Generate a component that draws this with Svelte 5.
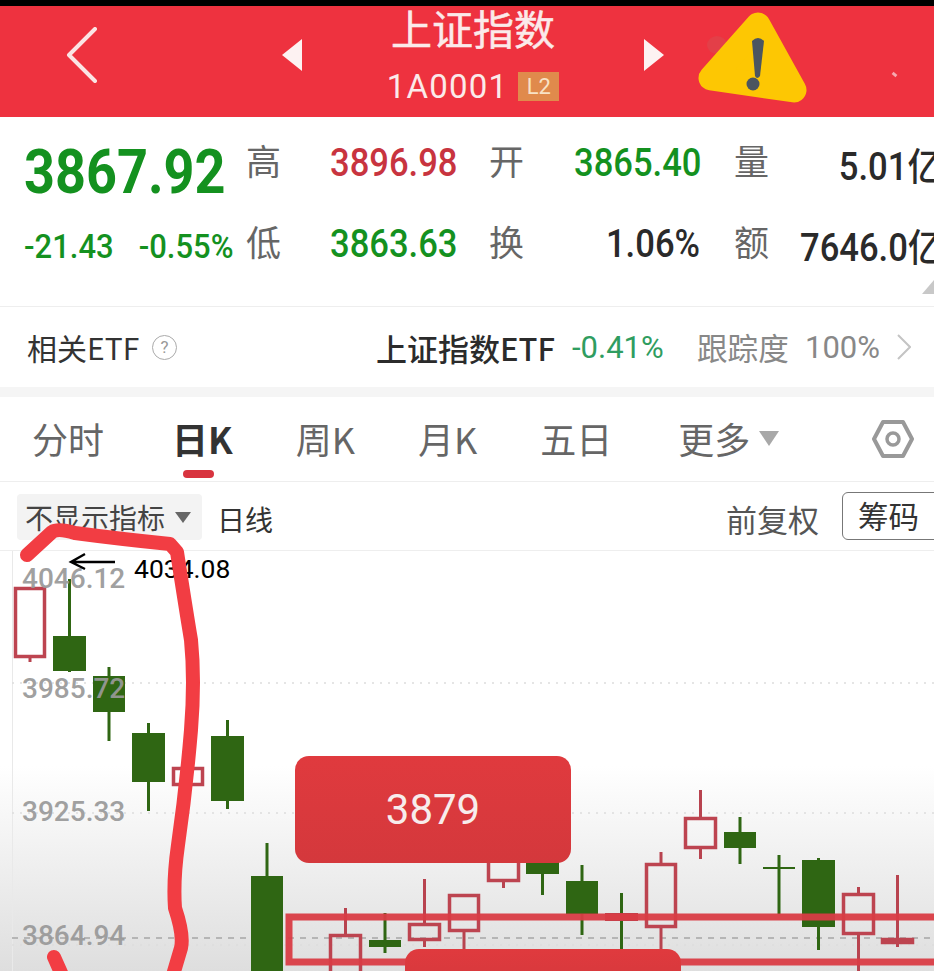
<script>
  const G = '#2f6613';
  // x: body left, w: body width, t/b: body top/bottom, hi/lo: wick, up: hollow red candle
  const candles = [
    { x: 14, w: 32, t: 587, b: 658, hi: 587, lo: 662, up: true },
    { x: 53, w: 33, t: 636, b: 671, hi: 579, lo: 672 },
    { x: 93, w: 32, t: 676, b: 712, hi: 667, lo: 741 },
    { x: 132, w: 33, t: 733, b: 782, hi: 723, lo: 811 },
    { x: 172, w: 32, t: 767, b: 786, hi: 767, lo: 786, up: true },
    { x: 211, w: 33, t: 736, b: 801, hi: 720, lo: 809 },
    { x: 251, w: 32, t: 876, b: 980, hi: 843, lo: 980 },
    { x: 329, w: 33, t: 934, b: 985, hi: 908, lo: 985, up: true },
    { x: 369, w: 32, t: 940, b: 947, hi: 913, lo: 953 },
    { x: 408, w: 33, t: 923, b: 941, hi: 879, lo: 947, up: true },
    { x: 448, w: 32, t: 894, b: 932, hi: 894, lo: 952, up: true },
    { x: 487, w: 33, t: 850, b: 882, hi: 850, lo: 888, up: true },
    { x: 526, w: 33, t: 850, b: 874, hi: 850, lo: 895 },
    { x: 566, w: 32, t: 881, b: 914, hi: 865, lo: 935 },
    { x: 605, w: 33, t: 913, b: 921, hi: 893, lo: 950, doji: true },
    { x: 645, w: 32, t: 863, b: 928, hi: 852, lo: 955, up: true },
    { x: 684, w: 33, t: 817, b: 849, hi: 790, lo: 859, up: true },
    { x: 724, w: 32, t: 832, b: 848, hi: 817, lo: 864 },
    { x: 763, w: 32, t: 867, b: 868, hi: 855, lo: 914 },
    { x: 802, w: 33, t: 860, b: 927, hi: 858, lo: 950 },
    { x: 842, w: 33, t: 893, b: 935, hi: 887, lo: 975, up: true },
    { x: 881, w: 33, t: 938, b: 944, hi: 875, lo: 947, up: true }
  ];
  const axis = [
    { v: '4046.12', y: 588 },
    { v: '3985.72', y: 698 },
    { v: '3925.33', y: 821 },
    { v: '3864.94', y: 945 }
  ];
  const tabs = ['分时', '日K', '周K', '月K', '五日'];
</script>

<div class="page">
  <div class="statusbar"></div>

  <header class="header">
    <svg class="back" viewBox="0 0 32 56"><path d="M29 2 L3 28 L29 54" /></svg>
    <span class="tri tri-l"></span>
    <div class="title">
      <div class="name">上证指数</div>
      <div class="code"><span>1A0001</span><span class="badge">L2</span></div>
    </div>
    <span class="tri tri-r"></span>
    <svg class="warn" viewBox="0 0 116 100">
      <ellipse cx="20" cy="37" rx="10" ry="9" fill="#cf5a5a" opacity=".35" />
      <polygon points="61,17 14,70 97,82" fill="#fdc703" stroke="#fdc703" stroke-width="25" stroke-linejoin="round" />
      <path d="M55 33 Q61 27 67 33 L63 68 Q60 72 58 68 Z" fill="#4b5560" />
      <circle cx="56" cy="76" r="6.5" fill="#4b5560" />
    </svg>
    <span class="speck"></span>
  </header>

  <section class="quote">
    <div class="price">3867.92</div>
    <div class="lab">高</div>
    <div class="val red">3896.98</div>
    <div class="lab">开</div>
    <div class="val green gap2">3865.40</div>
    <div class="lab">量</div>
    <div class="val dark end">5.01亿</div>

    <div class="change"><span>-21.43</span><span>-0.55%</span></div>
    <div class="lab">低</div>
    <div class="val green">3863.63</div>
    <div class="lab">换</div>
    <div class="val dark gap2">1.06%</div>
    <div class="lab">额</div>
    <div class="val dark end">7646.0亿</div>
    <span class="corner"></span>
  </section>

  <section class="etf">
    <span class="etf-title">相关ETF</span>
    <span class="help">?</span>
    <span class="etf-name">上证指数ETF</span>
    <span class="etf-pct">-0.41%</span>
    <span class="etf-track">跟踪度</span>
    <span class="etf-track num">100%</span>
    <svg class="chev" viewBox="0 0 14 26"><path d="M1 1 L13 13 L1 25" /></svg>
  </section>

  <nav class="tabs">
    {#each tabs as t, i}
      <div class="tab" class:active={i === 1}>{t}</div>
    {/each}
    <div class="tab more">更多<span class="caret"></span></div>
    <svg class="hex" viewBox="0 0 42 40">
      <polygon points="11,3 31,3 40,20 31,37 11,37 2,20" />
      <circle cx="21" cy="20" r="6" />
    </svg>
  </nav>

  <section class="sub">
    <div class="ind">不显示指标<span class="caret dark-caret"></span></div>
    <div class="line">日线</div>
    <div class="adj">前复权</div>
    <div class="chip">筹码</div>
  </section>

  <section class="chart">
    <svg viewBox="0 551 934 420" width="934" height="420">
      <line x1="12.5" y1="551" x2="12.5" y2="971" class="frame" />
      <line x1="12" y1="683" x2="934" y2="683" class="dot" />
      <line x1="12" y1="813" x2="934" y2="813" class="dot" />
      <line x1="12" y1="938" x2="934" y2="938" class="dash" />
      <line x1="12" y1="945" x2="934" y2="945" class="dot" />

      {#each candles as c}
        {#if c.up}
          <line x1={c.x + c.w / 2} x2={c.x + c.w / 2} y1={c.hi} y2={c.t} stroke="#b8434f" stroke-width="3" />
          <line x1={c.x + c.w / 2} x2={c.x + c.w / 2} y1={c.b} y2={c.lo} stroke="#b8434f" stroke-width="3" />
          <rect x={c.x + 1.5} y={c.t + 1.5} width={c.w - 3} height={c.b - c.t - 3} fill="none" stroke="#bd4450" stroke-width="3.5" />
        {:else if c.doji}
          <line x1={c.x + c.w / 2} x2={c.x + c.w / 2} y1={c.hi} y2={c.lo} stroke={G} stroke-width="3" />
          <rect x={c.x} y={c.t} width={c.w} height={c.b - c.t} fill="#b8434f" />
        {:else}
          <line x1={c.x + c.w / 2} x2={c.x + c.w / 2} y1={c.hi} y2={c.lo} stroke={G} stroke-width="3" />
          <rect x={c.x} y={c.t} width={c.w} height={Math.max(c.b - c.t, 2)} fill={G} />
        {/if}
      {/each}

      {#each axis as a}
        <text x="22" y={a.y} class="axis">{a.v}</text>
      {/each}

      <rect x="289" y="917" width="660" height="45" class="box" />

      <path d="M115 562 H71 M85 554 L71 562 L85 569" class="arrow" />
      <text x="134" y="578" class="hint">4034.08</text>

      <path d="M27 555 L52 532 Q58 528 75 533 Q120 539 170 544 L177 552 Q186 610 191 640 Q195 680 191 730 Q186 790 178 845 Q173 880 175 908 Q184 935 181 948 L173 975" class="scribble" />
      <path d="M54 957 L62 975" class="scribble" />
    </svg>

    <div class="bubble top">3879</div>
    <div class="bubble bottom"></div>
  </section>
</div>

<style>
  :global(body) { margin: 0; background: #fff; }
  .page {
    width: 934px; height: 971px; overflow: hidden; position: relative;
    font-family: "Noto Sans CJK SC", "Noto Sans", sans-serif; color: #333;
  }
  .statusbar { height: 6px; background: #000; }

  .header {
    height: 111px; background: #ee323f; display: flex; align-items: center;
    padding-left: 66px; position: relative; box-sizing: border-box;
  }
  .back { width: 32px; height: 56px; margin-top: -13px; margin-right: 184px; flex: none; }
  .back path { fill: none; stroke: #fbe4e4; stroke-width: 4; stroke-linecap: round; stroke-linejoin: round; }
  .tri { width: 0; height: 0; border-top: 16px solid transparent; border-bottom: 16px solid transparent; margin-top: -13px; }
  .tri-l { border-right: 20px solid #fdf2f2; }
  .tri-r { border-left: 20px solid #fdf2f2; }
  .title { width: 342px; display: flex; flex-direction: column; align-items: center; color: #fbeaea; margin-top: -6px; }
  .name { font-size: 41px; line-height: 48px; height: 56px; margin-top: -8px; -webkit-text-stroke: .5px #fbeaea; }
  .code { display: flex; align-items: center; gap: 10px; font-family: Roboto, sans-serif; font-size: 33px; line-height: 40px; letter-spacing: 1.2px; margin-top: 8px; }
  .badge {
    width: 41px; height: 29px; background: #e08a4c; color: #f8e2c6; font-size: 22px; line-height: 29px;
    text-align: center; letter-spacing: 0;
  }
  .warn { position: absolute; left: 697px; top: 0; width: 116px; height: 100px; margin-top: 2px; }
  .speck { position: absolute; left: 892px; top: 67px; width: 5px; height: 3px; background: #f6a9b0; transform: rotate(40deg); }

  .quote {
    height: 189px; box-sizing: border-box; padding: 5px 0 0 24px; position: relative; overflow: hidden;
    display: grid; grid-template-columns: 223px 83px 160px 84px 161px 65px 144px; grid-template-rows: 81px 81px; align-items: center;
  }
  .price { font-family: Roboto, sans-serif; font-weight: 700; font-size: 54px; line-height: 60px; color: #14911f; padding-top: 20px; transform: scaleY(1.14); transform-origin: 0 70%; }
  .change { display: flex; gap: 25px; font-family: Roboto, sans-serif; font-weight: 500; font-size: 31px; color: #14911f; padding-top: 6px; transform: scaleY(1.08); white-space: nowrap; }
  .lab { font-size: 35px; line-height: 44px; color: #666; margin-top: -5px; margin-left: -1px; }
  .val {
    font-family: Roboto, "Noto Sans CJK SC", sans-serif; font-weight: 500; font-size: 34.6px; text-align: right; white-space: nowrap;
    transform: scaleY(1.1); padding-right: 33px;
  }
  .val.gap2 { padding-right: 35px; }
  .val.end { padding-right: 2px; }
  .red { color: #c8343f; }
  .green { color: #14911f; }
  .dark { color: #2a2a2a; }
  .corner { position: absolute; right: 0; bottom: 12px; width: 0; height: 0; border-left: 12px solid transparent; border-bottom: 14px solid #c8c8c8; }

  .etf {
    height: 81px; box-sizing: border-box; border-top: 1px solid #eee;
    display: flex; align-items: center; padding-left: 27px; font-size: 30px; white-space: nowrap;
  }
  .etf-title { color: #333; width: 125px; }
  .help {
    width: 25px; height: 25px; border: 1.5px solid #aaa; border-radius: 50%; box-sizing: border-box;
    display: flex; align-items: center; justify-content: center; font-size: 17px; color: #999;
    font-family: Roboto, sans-serif; margin-right: 199px;
  }
  .etf-name { width: 196px; color: #2b2b2b; font-weight: 500; font-size: 31px; }
  .etf-pct { width: 125px; font-family: Roboto, sans-serif; color: #2f9d60; font-size: 31px; }
  .etf-track { color: #888; width: 108px; font-size: 30.6px; }
  .etf-track.num { width: 92px; font-family: Roboto, sans-serif; font-size: 31px; }
  .chev { width: 14px; height: 26px; }
  .chev path { fill: none; stroke: #c4c4c4; stroke-width: 2; }

  .tabs {
    border-top: 10px solid #f5f5f5; height: 95px; box-sizing: border-box; border-bottom: 1px solid #eee;
    display: flex; align-items: center; gap: 63px; padding: 0 0 0 32px; position: relative;
    font-size: 36px; color: #666;
  }
  .tab { white-space: nowrap; line-height: 44px; margin-top: -2px; position: relative; }
  .tab.active { color: #333; font-weight: 700; margin-left: 5px; }
  .tab.active::after {
    content: ""; position: absolute; left: 11px; bottom: -18px; width: 31px; height: 8px; border-radius: 4px; background: #d8343f;
  }
  .more { display: flex; align-items: center; gap: 9px; margin-left: 3px; }
  .caret { width: 0; height: 0; border-left: 10px solid transparent; border-right: 10px solid transparent; border-top: 15px solid #a8a8a8; }
  .hex { position: absolute; left: 872px; top: 22px; width: 42px; height: 40px; }
  .hex polygon { fill: none; stroke: #999; stroke-width: 4; stroke-linejoin: round; }
  .hex circle { fill: none; stroke: #999; stroke-width: 3.5; }

  .sub { height: 69px; display: flex; align-items: center; position: relative; padding-left: 17px; box-sizing: border-box; border-bottom: 1px solid #eee; }
  .ind {
    width: 185px; height: 46px; box-sizing: border-box; background: #f3f3f3; border-radius: 4px; margin-top: 2px;
    display: flex; align-items: center; padding-left: 8px; gap: 10px; font-size: 28px; color: #444; white-space: nowrap;
  }
  .dark-caret { border-left-width: 8px; border-right-width: 8px; border-top: 11px solid #666; }
  .line { margin-left: 15px; font-size: 28px; color: #333; margin-top: 6px; }
  .adj { margin-left: auto; font-size: 31px; color: #555; margin-right: 23px; margin-top: 5px; }
  .chip {
    width: 104px; height: 48px; flex: none; margin-right: -12px; box-sizing: border-box; border: 1px solid #777; border-radius: 6px;
    padding-left: 15px; font-size: 30.5px; line-height: 44px; color: #333;
  }

  .chart {
    height: 420px; position: relative;
    background: linear-gradient(to bottom, #fff 0, #fff 215px, #dedede 420px);
  }
  .chart svg { display: block; overflow: visible; position: absolute; inset: 0; }
  .frame { stroke: #e9e9e9; stroke-width: 1; }
  .dot { stroke: #ddd; stroke-width: 1.5; stroke-dasharray: 2 6; }
  .dash { stroke: #a6a6a6; stroke-width: 1.5; stroke-dasharray: 6 6; }
  .axis { font-family: Roboto, sans-serif; font-weight: 500; font-size: 28px; fill: #999; opacity: .92; }
  .hint { font-family: Roboto, sans-serif; font-size: 26.5px; fill: #000; }
  .arrow { fill: none; stroke: #000; stroke-width: 2.4; }
  .box { fill: none; stroke: #d93c44; stroke-width: 7; opacity: .95; }
  .scribble { fill: none; stroke: #f23d43; stroke-width: 14; stroke-linecap: round; stroke-linejoin: round; }
  .bubble { position: absolute; background: linear-gradient(to bottom, #e03a3e, #d4383c); border-radius: 14px; }
  .top {
    left: 295px; top: 205px; width: 276px; height: 107px; display: flex; align-items: center; justify-content: center;
    color: #f7ecec; font-family: Roboto, sans-serif; font-size: 42px;
  }
  .bottom { left: 405px; top: 398px; width: 276px; height: 40px; }
</style>
